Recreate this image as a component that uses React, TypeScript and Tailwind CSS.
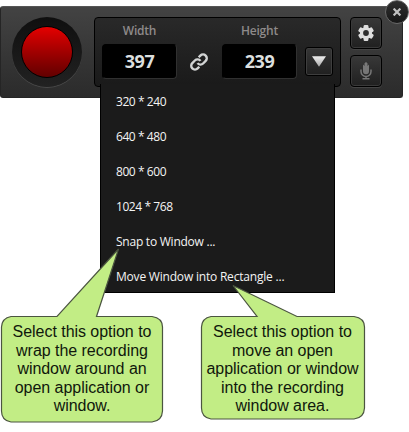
import React from "react";

const presets = [
  { label: "320 * 240", cls: "tracking-[-0.43px]" },
  { label: "640 * 480", cls: "tracking-[-0.43px]" },
  { label: "800 * 600", cls: "tracking-[-0.43px]" },
  { label: "1024 * 768", cls: "tracking-[-0.43px]" },
  { label: "Snap to Window ...", cls: "tracking-[-0.24px]" },
  { label: "Move Window into Rectangle ...", cls: "tracking-[-0.2px]" },
];

function SizeField({ label, value }: { label: string; value: string }) {
  return (
    <div className="flex w-[75px] flex-col items-center">
      <span className="h-[26px] pt-[5px] text-[12px] leading-[16px] font-semibold tracking-[-0.25px] text-[#8e8a8a]">{label}</span>
      <div className="flex h-[35px] w-full items-center justify-center rounded-[4px] border border-t-black border-l-black border-r-[#303030] border-b-[#303030] bg-black pb-px text-[18px] leading-none font-bold tracking-[-0.4px] text-[#dcdfdf]">
        {value}
      </div>
    </div>
  );
}

function ToolButton({ children }: { children: React.ReactNode }) {
  return (
    <button className="flex h-8 w-8 items-center justify-center rounded-[4px] border border-black bg-linear-to-b from-[#383838] to-[#202020] shadow-[0_1px_0_#444,inset_0_0_0_1px_#393939]">
      {children}
    </button>
  );
}

function LinkIcon() {
  return (
    <svg width="18" height="18" viewBox="0 0 24 24" fill="none" stroke="#d2d4d4" strokeWidth="3.2">
      <path d="M10 13.5a5 5 0 0 0 7.5.5l3.4-3.4a5 5 0 0 0-7.1-7.1l-2.2 2.2" />
      <path d="M14 10.5a5 5 0 0 0-7.5-.5l-3.4 3.4a5 5 0 0 0 7.1 7.1l2.2-2.2" />
    </svg>
  );
}

function GearIcon() {
  return (
    <svg width="16" height="16" viewBox="0 0 16 16">
      <g fill="#dedede">
        <circle cx="8" cy="8" r="6.1" />
        {[0, 60, 120].map((a) => (
          <rect key={a} x="5.6" y="0.1" width="4.8" height="15.8" rx="1.2" transform={`rotate(${a} 8 8)`} />
        ))}
      </g>
      <circle cx="8" cy="8" r="2.9" fill="#2d2d2d" />
    </svg>
  );
}

function MicIcon() {
  return (
    <svg width="12" height="18" viewBox="0 0 12 18" fill="none" stroke="#777">
      <path d="M3 2.6v6.6a3 3 0 0 0 6 0V2.6L7.5 4V1.2L6 .1 4.5 1.2V4z" fill="#777" stroke="none" />
      <path d="M1 7.5v2a5 5 0 0 0 10 0v-2M6 14.5v2.5M2.5 16.8h7" strokeWidth="1.5" />
    </svg>
  );
}

function Callout({ place, height, outline, lines }: { place: string; height: number; outline: string; lines: string[] }) {
  return (
    <div className={`absolute ${place}`}>
      <svg className="absolute bottom-0 left-0" width="166" height={height} viewBox={`0 0 166 ${height}`}>
        <path d={outline} fill="#c2ed85" stroke="#4b5540" strokeWidth="1.2" />
      </svg>
      <div className="relative flex flex-col items-center pt-[7px] font-['Liberation_Sans',Arial,sans-serif] text-[16px] leading-[18.5px] text-[#10180c]">
        {lines.map((line) => (
          <span key={line} className="tracking-[-0.04px] whitespace-nowrap">{line}</span>
        ))}
      </div>
    </div>
  );
}

export default function App() {
  return (
    <main className="relative h-[432px] w-[409px] overflow-hidden bg-white pt-[6px] font-['Open_Sans','Noto_Sans',sans-serif]">
      <header className="relative flex h-[92px] w-[403px] rounded-[3px] border border-[#252525] border-t-[#555] bg-linear-to-b from-[#434343] to-[#2b2b2b] pt-[10px] pl-[11px]">
        <button className="flex h-[70px] w-[70px] items-center justify-center rounded-full bg-linear-to-b from-[#0f0f0f] to-[#222] shadow-[0_1px_0_#494949]">
          <span className="h-[52px] w-[52px] rounded-full border border-black bg-linear-to-b from-[#e50000] to-[#620000]" />
        </button>
        <section className="ml-[12px] flex h-[70px] w-[247px] rounded-[4px] border border-black bg-linear-to-b from-[#292929] to-[#1a1a1a] pl-[7px]">
          <SizeField label="Width" value="397" />
          <div className="mt-[35px] ml-[13px] h-[18px] w-[18px]">
            <LinkIcon />
          </div>
          <div className="ml-[14px]">
            <SizeField label="Height" value="239" />
          </div>
          <button className="mt-[29px] ml-[8px] flex h-[29px] w-[28px] items-center justify-center rounded-[3px] border border-black bg-linear-to-b from-[#363636] to-[#202020] shadow-[inset_0_0_0_1px_#3e3e3e]">
            <svg width="14" height="11" viewBox="0 0 14 11">
              <defs>
                <linearGradient id="arrow" x1="0" y1="0" x2="0" y2="1">
                  <stop stopColor="#eee" />
                  <stop offset="1" stopColor="#aaa" />
                </linearGradient>
              </defs>
              <path d="M0 .3h14L7 10.7z" fill="url(#arrow)" />
            </svg>
          </button>
        </section>
        <div className="ml-[9px] flex flex-col gap-[6px]">
          <ToolButton><GearIcon /></ToolButton>
          <ToolButton><MicIcon /></ToolButton>
        </div>
      </header>

      <button className="absolute top-0 left-[385px] flex h-6 w-6 items-center justify-center rounded-full border border-[#686868] bg-linear-to-b from-[#303030] to-[#171717]">
        <svg width="8" height="8" viewBox="0 0 8 8" stroke="#c2c2c2" strokeWidth="2.2">
          <path d="M.6.6l6.8 6.8M7.4.6L.6 7.4" />
        </svg>
      </button>

      <ul className="absolute top-[84px] left-[100px] flex h-[209px] w-[235px] flex-col border border-t-0 border-black bg-[#1b1b1b] pl-[15px] text-[12px] leading-[35px] text-[#f4f4f4]">
        {presets.map((item) => (
          <li key={item.label} className={`h-[35px] whitespace-nowrap ${item.cls}`}>{item.label}</li>
        ))}
      </ul>

      <Callout
        place="top-[316px] left-0 h-[107px] w-[164px]"
        height={175}
        outline="M11 68.5H57L118.5 1 96.5 68.5H152Q162.5 70 162.5 79V163Q162 173 152 174H11Q1.5 172.5 1.5 163V79Q2 70 11 68.5Z"
        lines={["Select this option to", "wrap the recording", "window around an", "open application or", "window."]}
      />
      <Callout
        place="top-[316px] left-[200px] h-[104px] w-[165px]"
        height={136}
        outline="M11 32.5H57L33 1.5 97 32.5H154Q164.5 34 164.5 43V124Q164 134 154 135H11Q1.5 133.5 1.5 124V43Q2 34 11 32.5Z"
        lines={["Select this option to", "move an open", "application or window", "into the recording", "window area."]}
      />
    </main>
  );
}
